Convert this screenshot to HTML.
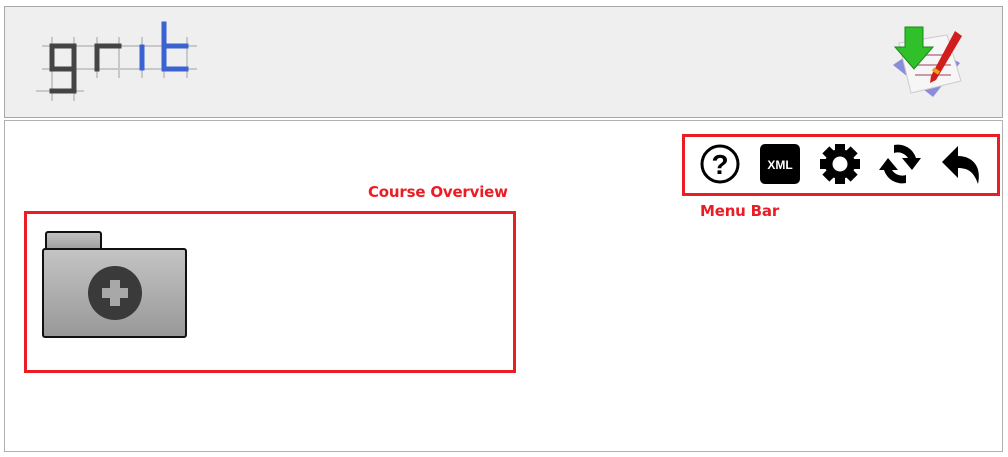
<!DOCTYPE html>
<html><head><style>
body{margin:0;width:1008px;height:457px;background:#fff;position:relative;overflow:hidden;font-family:"Liberation Sans",sans-serif}
.a{position:absolute}
.lbl{position:absolute;color:#ea1c24;font-weight:bold;font-size:15px;font-family:"DejaVu Sans","Liberation Sans",sans-serif;letter-spacing:-0.2px}
</style></head><body>
<div class="a" style="left:4px;top:6px;width:997px;height:110px;background:#efefef;border:1px solid #a8a8a8"></div>
<div class="a" style="left:4px;top:120px;width:997px;height:330px;background:#fff;border:1px solid #b0b0b0"></div>
<svg class="a" style="left:0;top:0" width="1008" height="457">
<g stroke="#c8c8c8" stroke-width="2">
<line x1="42" y1="46" x2="197" y2="46"/><line x1="42" y1="69" x2="197" y2="69"/><line x1="36" y1="91" x2="84" y2="91"/>
<line x1="52" y1="37" x2="52" y2="101"/><line x1="74" y1="37" x2="74" y2="101"/><line x1="97" y1="37" x2="97" y2="78"/><line x1="119" y1="37" x2="119" y2="78"/><line x1="142" y1="37" x2="142" y2="78"/><line x1="164" y1="37" x2="164" y2="78"/><line x1="187" y1="37" x2="187" y2="78"/>
</g>
<g stroke="#444" stroke-width="5" fill="none" stroke-linecap="square">
<path d="M52 46H74V91H52M52 46V69H74"/><path d="M97 69V46H119"/>
</g>
<g stroke="#3a63d1" stroke-width="5" fill="none" stroke-linecap="square">
<path d="M142 47V68"/><path d="M164 24V69H186M164 46H186"/>
</g>
<g transform="translate(885,25)">
<path d="M8 40 L40 18 L75 38 L48 72 Z" fill="#8c8cdc"/>
<path d="M14 18 L62 10 L76 56 L26 68 Z" fill="#f6f6f6" stroke="#ccc"/>
<path d="M26 30h40M28 40h38M30 50h36" stroke="#c9a" stroke-width="2"/>
<path d="M20 2h18v20h10l-19 22-19-22h10z" fill="#2fc02a" stroke="#1a8a1a"/>
<path d="M70 6l7 5-26 44-6 3 1-7z" fill="#d21d1d"/>
<path d="M48 44l6 4" stroke="#e8a020" stroke-width="4"/>
</g>
<defs><linearGradient id="fg" x1="0" y1="0" x2="0" y2="1"><stop offset="0" stop-color="#c4c4c4"/><stop offset="1" stop-color="#989898"/></linearGradient></defs>
<rect x="46" y="232" width="55" height="20" rx="2" fill="url(#fg)" stroke="#111" stroke-width="2"/>
<rect x="43" y="249" width="143" height="88" rx="2" fill="url(#fg)" stroke="#111" stroke-width="2"/>
<circle cx="115" cy="293" r="27" fill="#3a3a3a"/>
<path d="M110 280h10v8h8v10h-8v8h-10v-8h-8v-10h8z" fill="#a8a8a8"/>
<rect x="25.5" y="212.5" width="489" height="159" fill="none" stroke="#ea1c24" stroke-width="3"/>
<rect x="683.5" y="135.5" width="315" height="59" fill="none" stroke="#ea1c24" stroke-width="3"/>
<circle cx="720" cy="164" r="18" fill="none" stroke="#000" stroke-width="3"/>
<text x="720" y="174" text-anchor="middle" font-family="Liberation Sans" font-weight="bold" font-size="28">?</text>
<rect x="760" y="144" width="40" height="40" rx="5" fill="#000"/>
<text x="780" y="169" text-anchor="middle" fill="#fff" font-family="Liberation Sans" font-weight="bold" font-size="12">XML</text>
<g transform="translate(840,164)">
<g fill="#000"><rect x="-5" y="-20" width="10" height="40"/><rect x="-5" y="-20" width="10" height="40" transform="rotate(45)"/><rect x="-5" y="-20" width="10" height="40" transform="rotate(90)"/><rect x="-5" y="-20" width="10" height="40" transform="rotate(135)"/></g>
<circle r="15" fill="#000"/><circle r="7.5" fill="#fff"/>
</g>
<g transform="translate(900,164)" fill="#000">
<path d="M-6 -19 A19 19 0 0 1 16 -6 L21 -6 L12 6 L2 -6 L8 -6 A12 12 0 0 0 -6 -11 Z"/>
<path d="M6 19 A19 19 0 0 1 -16 6 L-21 6 L-12 -6 L-2 6 L-8 6 A12 12 0 0 0 6 11 Z"/>
</g>
<path d="M942 162 L958 146 L958 156 C972 156 982 166 978 184 C974 172 968 168 958 168 L958 178 Z" fill="#000"/>
</svg>
<div class="lbl" style="left:368px;top:183px">Course Overview</div>
<div class="lbl" style="left:700px;top:202px">Menu Bar</div>
</body></html>
